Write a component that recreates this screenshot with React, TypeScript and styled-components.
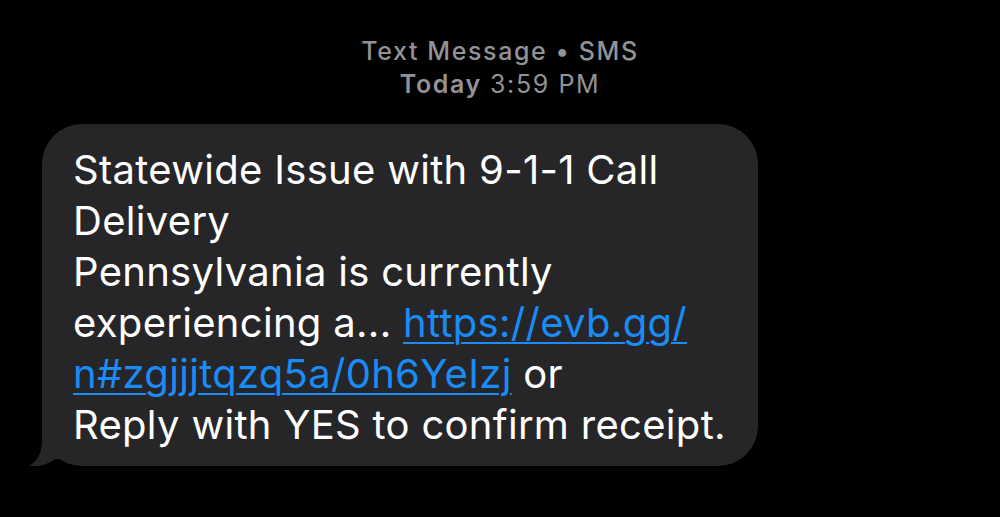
import React from "react";
import styled, { createGlobalStyle } from "styled-components";

const Global = createGlobalStyle`
  html, body { margin: 0; padding: 0; background: #000; }
  body { font-family: Inter, "Noto Sans", sans-serif; -webkit-font-smoothing: antialiased; }
`;

const Page = styled.div`
  width: 1000px;
  height: 517px;
  background: #000;
  display: flex;
  flex-direction: column;
  overflow: hidden;
`;

const Header = styled.div`
  padding-top: 35px;
  display: flex;
  flex-direction: column;
  align-items: center;
  color: #929297;
  font-size: 25px;
  line-height: 33px;
  letter-spacing: 1.6px;
`;

const HeaderLine = styled.div`
  font-weight: 500;
`;

const Strong = styled.span`
  font-weight: 600;
`;

const Thin = styled.span`
  font-weight: 400;
`;

const Thread = styled.div`
  padding: 23px 0 0 42px;
  display: flex;
`;

const Bubble = styled.div`
  position: relative;
  background: #262628;
  border-radius: 40px;
  padding: 20px 32px 16px 31px;
  color: #fff;
  font-size: 40px;
  line-height: 51px;
  letter-spacing: 0.3px;
`;

const Line = styled.div`
  white-space: nowrap;
`;

const Link = styled.span`
  color: #1a8cf8;
  text-decoration: underline;
  text-decoration-thickness: 2px;
  text-underline-offset: 5px;
`;

const Tail = styled.svg`
  position: absolute;
  left: -15px;
  bottom: 0;
`;

export default function App() {
  return (
    <Page>
      <Global />
      <Header>
        <HeaderLine>Text Message • SMS</HeaderLine>
        <HeaderLine>
          <Strong>Today</Strong> <Thin>3:59 PM</Thin>
        </HeaderLine>
      </Header>
      <Thread>
        <Bubble>
          <Tail width="45" height="40" viewBox="0 0 45 40">
            <path
              d="M15 0 L15 14 C15 26 11 35 2 40 C12 41 22 38 28 33 L45 33 L45 0 Z"
              fill="#262628"
            />
          </Tail>
          <Line>Statewide Issue with 9-1-1 Call</Line>
          <Line>Delivery</Line>
          <Line>Pennsylvania is currently</Line>
          <Line>
            experiencing a... <Link>https://evb.gg/</Link>
          </Line>
          <Line>
            <Link>n#zgjjjtqzq5a/0h6YeIzj</Link> or
          </Line>
          <Line>Reply with YES to confirm receipt.</Line>
        </Bubble>
      </Thread>
    </Page>
  );
}
